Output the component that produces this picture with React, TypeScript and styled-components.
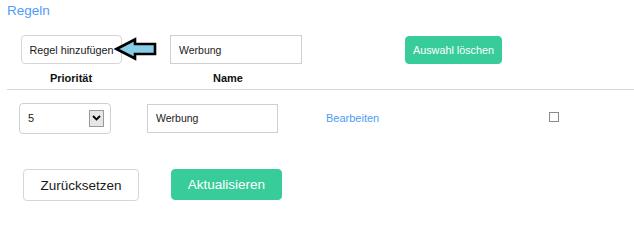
import styled, { createGlobalStyle } from "styled-components";

const GlobalStyle = createGlobalStyle`
  body {
    margin: 0;
    background: #fff;
    font-family: "Liberation Sans", Arial, sans-serif;
    color: #222;
  }
`;

const Page = styled.div`
  padding: 0 0 0 7px;
  width: 627px;
`;

const Title = styled.h3`
  margin: 0;
  padding-top: 2px;
  font-size: 13.5px;
  font-weight: normal;
  line-height: 18px;
  color: #4d9cf8;
`;

const Toolbar = styled.div`
  display: flex;
  align-items: center;
  margin-top: 15px;
  padding-left: 14px;
`;

const ButtonWrap = styled.div`
  position: relative;
  display: flex;
`;

const Button = styled.button<{ $primary?: boolean; $large?: boolean; $w: number; $h: number }>`
  box-sizing: border-box;
  width: ${(p) => p.$w}px;
  height: ${(p) => p.$h}px;
  padding: 0;
  white-space: nowrap;
  font-family: "Liberation Sans", Arial, sans-serif;
  font-size: ${(p) => (p.$large ? "13.5px" : "10.8px")};
  border-radius: 4px;
  cursor: pointer;
  background: ${(p) => (p.$primary ? "#37cc99" : "#fff")};
  color: ${(p) => (p.$primary ? "#fff" : "#1a1a1a")};
  border: 1px solid ${(p) => (p.$primary ? "#37cc99" : "#d6d6d6")};
`;

const Arrow = styled.svg`
  position: absolute;
  left: 93px;
  top: 2px;
`;

const TextInput = styled.input<{ $width: number }>`
  box-sizing: border-box;
  width: ${(p) => p.$width}px;
  height: 29px;
  padding: 0 8px;
  border: 1px solid #d0d0d0;
  border-radius: 0;
  font-family: "Liberation Sans", Arial, sans-serif;
  font-size: 10.5px;
  color: #222;
  outline: none;
`;

const Spacer = styled.div<{ $w: number }>`
  width: ${(p) => p.$w}px;
  flex: none;
`;

const Grid = styled.div`
  display: grid;
  grid-template-columns: 128px 186px 200px 1fr;
`;

const HeadCell = styled.div`
  text-align: center;
  font-size: 11px;
  font-weight: bold;
  color: #111;
  padding: 8px 0 5px;
  border-bottom: 1px solid #d8d8d8;
`;

const Cell = styled.div<{ $pad: number }>`
  display: flex;
  align-items: center;
  padding: 12px 0 0 ${(p) => p.$pad}px;
  height: 32px;
`;

const Select = styled.div`
  box-sizing: border-box;
  width: 92px;
  height: 31px;
  border: 1px solid #d0d0d0;
  border-radius: 4px;
  display: flex;
  align-items: center;
  justify-content: space-between;
  padding: 0 6px 0 8px;
  font-size: 11px;
`;

const SelectArrow = styled.span`
  box-sizing: border-box;
  width: 15px;
  height: 17px;
  background: #e6e6e6;
  border: 1px solid #9a9a9a;
  display: flex;
  align-items: center;
  justify-content: center;
`;

const Link = styled.a`
  color: #4d9cf8;
  font-size: 11px;
  text-decoration: none;
  cursor: pointer;
  margin-top: -1px;
`;

const Check = styled.span`
  box-sizing: border-box;
  width: 10px;
  height: 10px;
  border: 1px solid #8a8a8a;
  background: #fff;
  margin-top: -3px;
`;

const Footer = styled.div`
  display: flex;
  gap: 32px;
  margin-top: 35px;
  padding-left: 16px;
`;

export default function App() {
  return (
    <Page>
      <GlobalStyle />
      <Title>Regeln</Title>
      <Toolbar>
        <ButtonWrap>
          <Button $w={101} $h={29}>Regel hinzufügen</Button>
          <Arrow width="44" height="24" viewBox="0 0 44 24">
            <polygon
              points="2.5,12 21,2.5 21,7 41,7 41,17 21,17 21,21.5"
              fill="#88cde6"
              stroke="#000"
              strokeWidth="2.6"
              strokeLinejoin="miter"
            />
          </Arrow>
        </ButtonWrap>
        <Spacer $w={48} />
        <TextInput $width={132} defaultValue="Werbung" />
        <Spacer $w={103} />
        <Button $primary $w={97} $h={28}>
          Auswahl löschen
        </Button>
      </Toolbar>
      <Grid>
        <HeadCell>Priorität</HeadCell>
        <HeadCell>Name</HeadCell>
        <HeadCell />
        <HeadCell />
        <Cell $pad={12}>
          <Select>
            <span>5</span>
            <SelectArrow>
              <svg width="9" height="6" viewBox="0 0 9 6">
                <path d="M1 1 L4.5 4.5 L8 1" fill="none" stroke="#000" strokeWidth="1.8" />
              </svg>
            </SelectArrow>
          </Select>
        </Cell>
        <Cell $pad={12}>
          <TextInput $width={131} defaultValue="Werbung" />
        </Cell>
        <Cell $pad={5}>
          <Link>Bearbeiten</Link>
        </Cell>
        <Cell $pad={28}>
          <Check />
        </Cell>
      </Grid>
      <Footer>
        <Button $large $w={116} $h={32}>
          Zurücksetzen
        </Button>
        <Button $primary $large $w={111} $h={31}>
          Aktualisieren
        </Button>
      </Footer>
    </Page>
  );
}
